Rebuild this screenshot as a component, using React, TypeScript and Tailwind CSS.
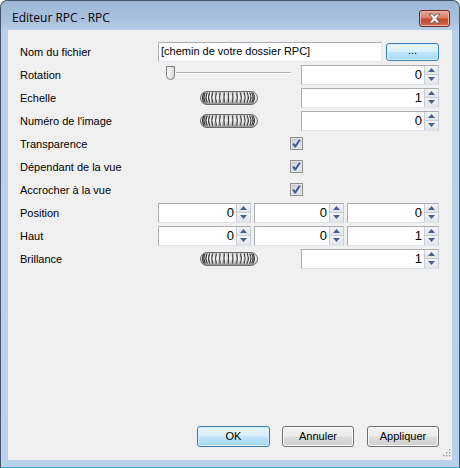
import React from "react";

const LBL = "font-['Liberation_Sans',Arial,sans-serif] text-[11px] text-black";

function Spinner({ value, className }: { value: string; className: string }) {
  return (
    <div className={`flex h-[20px] border border-[#abadb3] border-r-[#c9ccd3] border-b-[#dfe2e6] bg-white ${className}`}>
      <div className="flex-1 flex items-center justify-end pr-[2px] font-['Liberation_Sans',Arial,sans-serif] text-[13px] leading-none text-black">
        {value}
      </div>
      <div className="w-[14px] flex flex-col border-l border-[#c8ccd4]">
        <div className="flex-1 flex items-center justify-center bg-gradient-to-b from-[#f4f4f4] to-[#e0e4ea] border-b border-[#c8ccd4]">
          <svg width="7" height="4" viewBox="0 0 7 4"><path d="M0 4 L3.5 0 L7 4 Z" fill="#4c5f89" /></svg>
        </div>
        <div className="flex-1 flex items-center justify-center bg-gradient-to-b from-[#f4f4f4] to-[#e0e4ea]">
          <svg width="7" height="4" viewBox="0 0 7 4"><path d="M0 0 L7 0 L3.5 4 Z" fill="#4c5f89" /></svg>
        </div>
      </div>
    </div>
  );
}

function Jog() {
  const ridges: React.ReactNode[] = [];
  const N = 8;
  for (let k = -N; k <= N; k++) {
    const t = (k / N) * 1.35;
    const x = 28.5 + 25 * Math.sin(t);
    const bow = 3.2 * Math.sin(t);
    ridges.push(
      <path key={"d" + k} d={`M${x.toFixed(2)} 1.5 Q${(x + bow).toFixed(2)} 6.5 ${x.toFixed(2)} 11.5`} stroke="#3c3c3c" strokeWidth="1.3" fill="none" />
    );
    ridges.push(
      <path key={"l" + k} d={`M${(x + 1.3).toFixed(2)} 1.5 Q${(x + 1.3 + bow).toFixed(2)} 6.5 ${(x + 1.3).toFixed(2)} 11.5`} stroke="#f6f6f6" strokeWidth="0.9" fill="none" />
    );
  }
  return (
    <svg width="58" height="14" viewBox="0 0 58 14">
      <defs>
        <linearGradient id="jg" x1="0" y1="0" x2="0" y2="1">
          <stop offset="0" stopColor="#c8c8c8" />
          <stop offset="0.45" stopColor="#f2f2f2" />
          <stop offset="1" stopColor="#8a8a8a" />
        </linearGradient>
        <clipPath id="jc"><rect x="0.5" y="0.5" width="57" height="13" rx="6.5" /></clipPath>
      </defs>
      <rect x="0.5" y="0.5" width="57" height="13" rx="6.5" fill="url(#jg)" />
      <g clipPath="url(#jc)">{ridges}</g>
      <rect x="0.5" y="0.5" width="57" height="13" rx="6.5" fill="none" stroke="#6a6a6a" />
    </svg>
  );
}

function Check() {
  return (
    <svg width="13" height="13" viewBox="0 0 13 13">
      <defs>
        <linearGradient id="cg" x1="0" y1="0" x2="1" y2="1">
          <stop offset="0" stopColor="#c9ccd2" />
          <stop offset="1" stopColor="#f3f3f3" />
        </linearGradient>
      </defs>
      <rect x="0.5" y="0.5" width="12" height="12" fill="#f4f4f4" stroke="#8f8f8f" />
      <rect x="2" y="2" width="9" height="9" fill="url(#cg)" stroke="#b9bcc2" strokeWidth="0.6" />
      <path d="M3.2 6.6 L5.2 9.6 L9.8 2.8" stroke="#3d57a0" strokeWidth="1.9" fill="none" strokeLinejoin="round" />
    </svg>
  );
}

function Row({ label, children }: { label: string; children?: React.ReactNode }) {
  return (
    <div className="h-[23px] flex items-center">
      <div className={`w-[138px] pt-[2px] ${LBL}`}>{label}</div>
      <div className="w-[281px] h-full flex items-center">{children}</div>
    </div>
  );
}

function Btn({ label, primary, w }: { label: string; primary?: boolean; w: string }) {
  return (
    <div
      className={`${w} h-[21px] rounded-[3px] border flex items-center justify-center ${LBL} ${
        primary
          ? "border-[#3c7fb1] bg-[linear-gradient(#e8f5fc_0%,#d9eefb_48%,#bee4f8_52%,#a7d9f5_100%)] shadow-[inset_0_0_0_1px_#d8f0fb]"
          : "border-[#707070] bg-[linear-gradient(#f2f2f2_0%,#ebebeb_48%,#dddddd_52%,#cfcfcf_100%)] shadow-[inset_0_0_0_1px_#fbfbfb]"
      }`}
    >
      {label}
    </div>
  );
}

export default function App() {
  return (
    <div className="w-[460px] h-[468px] overflow-hidden bg-white">
      <div className="w-[460px] h-[468px] rounded-t-[7px] border border-[#44546a] border-b-[#2fb7c9] bg-[linear-gradient(#9db7d7_0px,#aac2df_20px,#b7cfe9_30px,#bad2eb_100%)] flex flex-col">
        <div className="h-[29px] flex items-start justify-between pl-[11px] pr-[9px]">
          <div className="mt-[9px] font-['Open_Sans','Noto_Sans',sans-serif] text-[12px] leading-[16px] text-black">Editeur RPC - RPC</div>
          <div className="mt-[9px] w-[31px] h-[17px] rounded-[3px] border border-[#6b2a1f] bg-[linear-gradient(#eaa999_0%,#dc8068_45%,#c3462c_55%,#d06a52_100%)] shadow-[inset_0_0_0_1px_#eeb4a6] flex items-center justify-center">
            <svg width="13" height="11" viewBox="0 0 13 11">
              <path d="M1 1 H4.5 L6.5 3.3 L8.5 1 H12 L8.3 5.5 L12 10 H8.5 L6.5 7.7 L4.5 10 H1 L4.7 5.5 Z" fill="#ffffff" stroke="#6a5450" strokeWidth="0.9" strokeLinejoin="round" />
            </svg>
          </div>
        </div>
        <div className="mx-[7px] w-[444px] h-[430px] bg-[#f0f0f0] relative flex flex-col pl-[12px] pt-[10px] pb-[13px] pr-[13px]">
          <Row label="Nom du fichier">
            <div className="w-[224px] h-[20px] border border-[#abadb3] border-t-[#abadb3] border-r-[#e3e9ef] border-b-[#e3e9ef] bg-white flex items-center pl-[2px]">
              <span className={LBL}>[chemin de votre dossier RPC]</span>
            </div>
            <div className="ml-[4px] w-[53px] h-[18px] rounded-[3px] border border-[#3c7fb1] bg-[linear-gradient(#eaf6fd_0%,#d9f0fc_48%,#bee6fd_52%,#a7d9f5_100%)] shadow-[inset_0_0_0_1px_#d8f0fb] flex items-center justify-center">
              <span className={`${LBL} leading-none pb-[3px]`}>...</span>
            </div>
          </Row>
          <Row label="Rotation">
            <div className="relative w-[135px] h-full flex items-center">
              <div className="absolute left-[18px] right-[2px] top-[9px] h-[2px] border-t border-[#b0b0b0] bg-white" />
              <svg className="absolute left-[7px] top-[2px]" width="11" height="16" viewBox="0 0 11 16">
                <defs>
                  <linearGradient id="tg" x1="0" y1="0" x2="1" y2="0">
                    <stop offset="0" stopColor="#ffffff" />
                    <stop offset="1" stopColor="#d6d6d6" />
                  </linearGradient>
                </defs>
                <path d="M1.5 1.5 H9.5 V10.5 Q9.5 14.5 5.5 14.5 Q1.5 14.5 1.5 10.5 Z" fill="url(#tg)" stroke="#7f7f7f" />
              </svg>
            </div>
            <Spinner value="0" className="ml-auto w-[138px]" />
          </Row>
          <Row label="Echelle">
            <div className="ml-[42px]"><Jog /></div>
            <Spinner value="1" className="ml-auto w-[138px]" />
          </Row>
          <Row label="Numéro de l'image">
            <div className="ml-[42px]"><Jog /></div>
            <Spinner value="0" className="ml-auto w-[138px]" />
          </Row>
          <Row label="Transparence">
            <div className="ml-[132px] flex"><Check /></div>
          </Row>
          <Row label="Dépendant de la vue">
            <div className="ml-[132px] flex"><Check /></div>
          </Row>
          <Row label="Accrocher à la vue">
            <div className="ml-[132px] flex"><Check /></div>
          </Row>
          <Row label="Position">
            <div className="flex gap-[3px] w-full">
              <Spinner value="0" className="w-[93px]" />
              <Spinner value="0" className="w-[90px]" />
              <Spinner value="0" className="w-[92px]" />
            </div>
          </Row>
          <Row label="Haut">
            <div className="flex gap-[3px] w-full">
              <Spinner value="0" className="w-[93px]" />
              <Spinner value="0" className="w-[90px]" />
              <Spinner value="1" className="w-[92px]" />
            </div>
          </Row>
          <Row label="Brillance">
            <div className="ml-[42px]"><Jog /></div>
            <Spinner value="1" className="ml-auto w-[138px]" />
          </Row>
          <div className="flex-1" />
          <div className="flex justify-end">
            <Btn label="OK" primary w="w-[73px]" />
            <div className="w-[12px]" />
            <Btn label="Annuler" w="w-[72px]" />
            <div className="w-[13px]" />
            <Btn label="Appliquer" w="w-[72px]" />
          </div>
          <svg className="absolute right-[1px] bottom-[1px]" width="11" height="11" viewBox="0 0 11 11">
            {[[9, 1], [9, 4], [9, 7], [6, 4], [6, 7], [3, 7]].map(([x, y], i) => (
              <g key={i}>
                <rect x={x + 1} y={y + 1} width="1.5" height="1.5" fill="#ffffff" />
                <rect x={x} y={y} width="1.5" height="1.5" fill="#9a9a9a" />
              </g>
            ))}
          </svg>
        </div>
      </div>
    </div>
  );
}
